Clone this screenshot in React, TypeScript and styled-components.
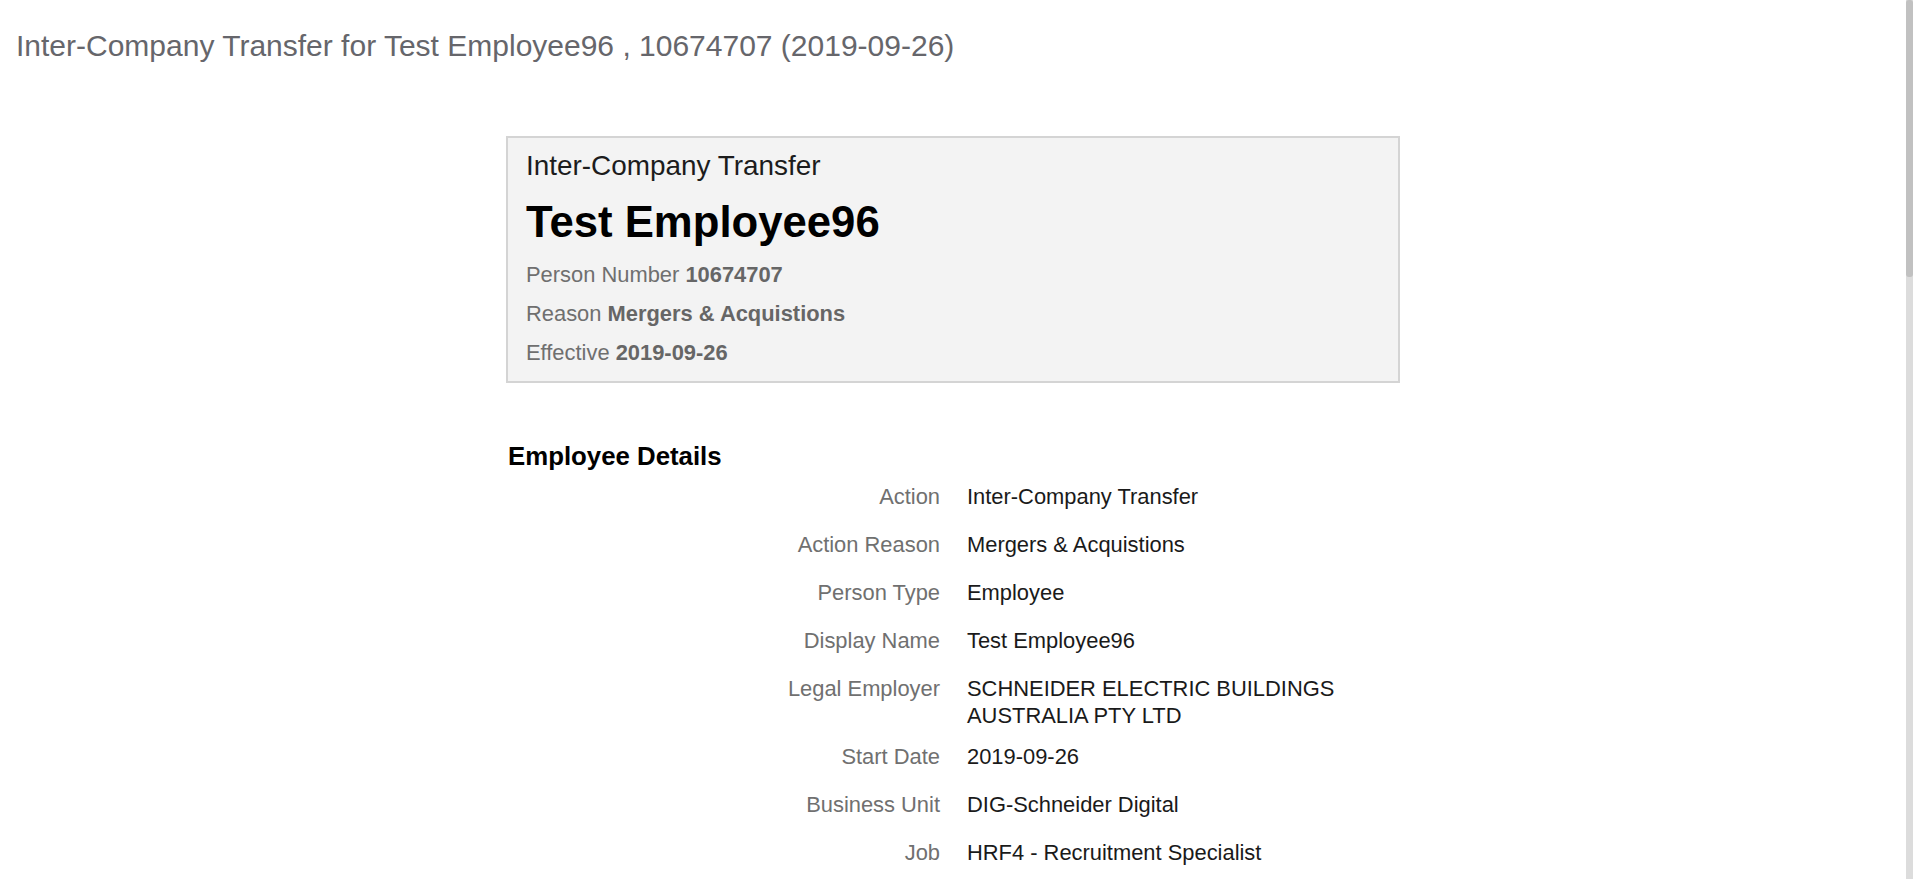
import React from "react";
import styled, { createGlobalStyle } from "styled-components";

const GlobalStyle = createGlobalStyle`
  html, body {
    margin: 0;
    padding: 0;
    background: #ffffff;
    overflow: hidden;
    height: 100%;
  }
  body {
    font-family: "Liberation Sans", Arial, Helvetica, sans-serif;
  }
  * { box-sizing: border-box; }
`;

const Page = styled.div`
  display: flex;
  height: 100vh;
  width: 100%;
`;

const Content = styled.main`
  flex: 1;
  min-width: 0;
  display: flex;
  flex-direction: column;
`;

const PageTitle = styled.h1`
  margin: 0;
  padding: 28px 16px 0;
  font-size: 30px;
  line-height: 36px;
  font-weight: 400;
  color: #66666b;
`;

const Column = styled.div`
  width: 894px;
  margin: 72px auto 0;
  display: flex;
  flex-direction: column;
`;

const SummaryCard = styled.section`
  border: 2px solid #d4d4d4;
  background: #f3f3f3;
  padding: 11px 18px 9px;
`;

const CardKicker = styled.div`
  font-size: 27.9px;
  line-height: 34px;
  color: #1c1c1c;
`;

const CardName = styled.h2`
  margin: 14px 0 8px;
  font-size: 43.7px;
  line-height: 50px;
  font-weight: 700;
  color: #000;
`;

const MetaLine = styled.div`
  font-size: 21.9px;
  line-height: 39px;
  color: #6f6f6f;

  b {
    font-weight: 700;
    color: #666666;
  }
`;

const SectionTitle = styled.h3`
  margin: 58px 0 4.5px 2px;
  font-size: 25.8px;
  line-height: 30px;
  font-weight: 700;
  color: #000;
`;

const DetailRow = styled.div`
  display: grid;
  grid-template-columns: 434px 1fr;
  column-gap: 27px;
  min-height: 48px;
  padding: 7px 0 7.5px;
  font-size: 21.9px;
  line-height: 27px;
`;

const DetailLabel = styled.div`
  text-align: right;
  color: #707070;
`;

const DetailValue = styled.div`
  color: #1a1a1a;
`;

const ScrollRail = styled.div`
  flex: 0 0 14px;
  height: 100vh;
  padding-right: 7px;
  display: flex;
`;

const ScrollTrack = styled.div`
  flex: 1;
  background: #dcdcdc;
  display: flex;
  flex-direction: column;
`;

const ScrollThumb = styled.div`
  height: 277px;
  background: #c1c1c1;
  border-radius: 3px;
`;

const details: { label: string; value: string }[] = [
  { label: "Action", value: "Inter-Company Transfer" },
  { label: "Action Reason", value: "Mergers & Acquistions" },
  { label: "Person Type", value: "Employee" },
  { label: "Display Name", value: "Test Employee96" },
  { label: "Legal Employer", value: "SCHNEIDER ELECTRIC BUILDINGS AUSTRALIA PTY LTD" },
  { label: "Start Date", value: "2019-09-26" },
  { label: "Business Unit", value: "DIG-Schneider Digital" },
  { label: "Job", value: "HRF4 - Recruitment Specialist" },
];

export default function App() {
  return (
    <>
      <GlobalStyle />
      <Page>
        <Content>
          <PageTitle>Inter-Company Transfer for Test Employee96 , 10674707 (2019-09-26)</PageTitle>
          <Column>
            <SummaryCard>
              <CardKicker>Inter-Company Transfer</CardKicker>
              <CardName>Test Employee96</CardName>
              <MetaLine>
                Person Number <b>10674707</b>
              </MetaLine>
              <MetaLine>
                Reason <b>Mergers &amp; Acquistions</b>
              </MetaLine>
              <MetaLine>
                Effective <b>2019-09-26</b>
              </MetaLine>
            </SummaryCard>
            <SectionTitle>Employee Details</SectionTitle>
            {details.map((d) => (
              <DetailRow key={d.label}>
                <DetailLabel>{d.label}</DetailLabel>
                <DetailValue>{d.value}</DetailValue>
              </DetailRow>
            ))}
          </Column>
        </Content>
        <ScrollRail>
          <ScrollTrack>
            <ScrollThumb />
          </ScrollTrack>
        </ScrollRail>
      </Page>
    </>
  );
}
